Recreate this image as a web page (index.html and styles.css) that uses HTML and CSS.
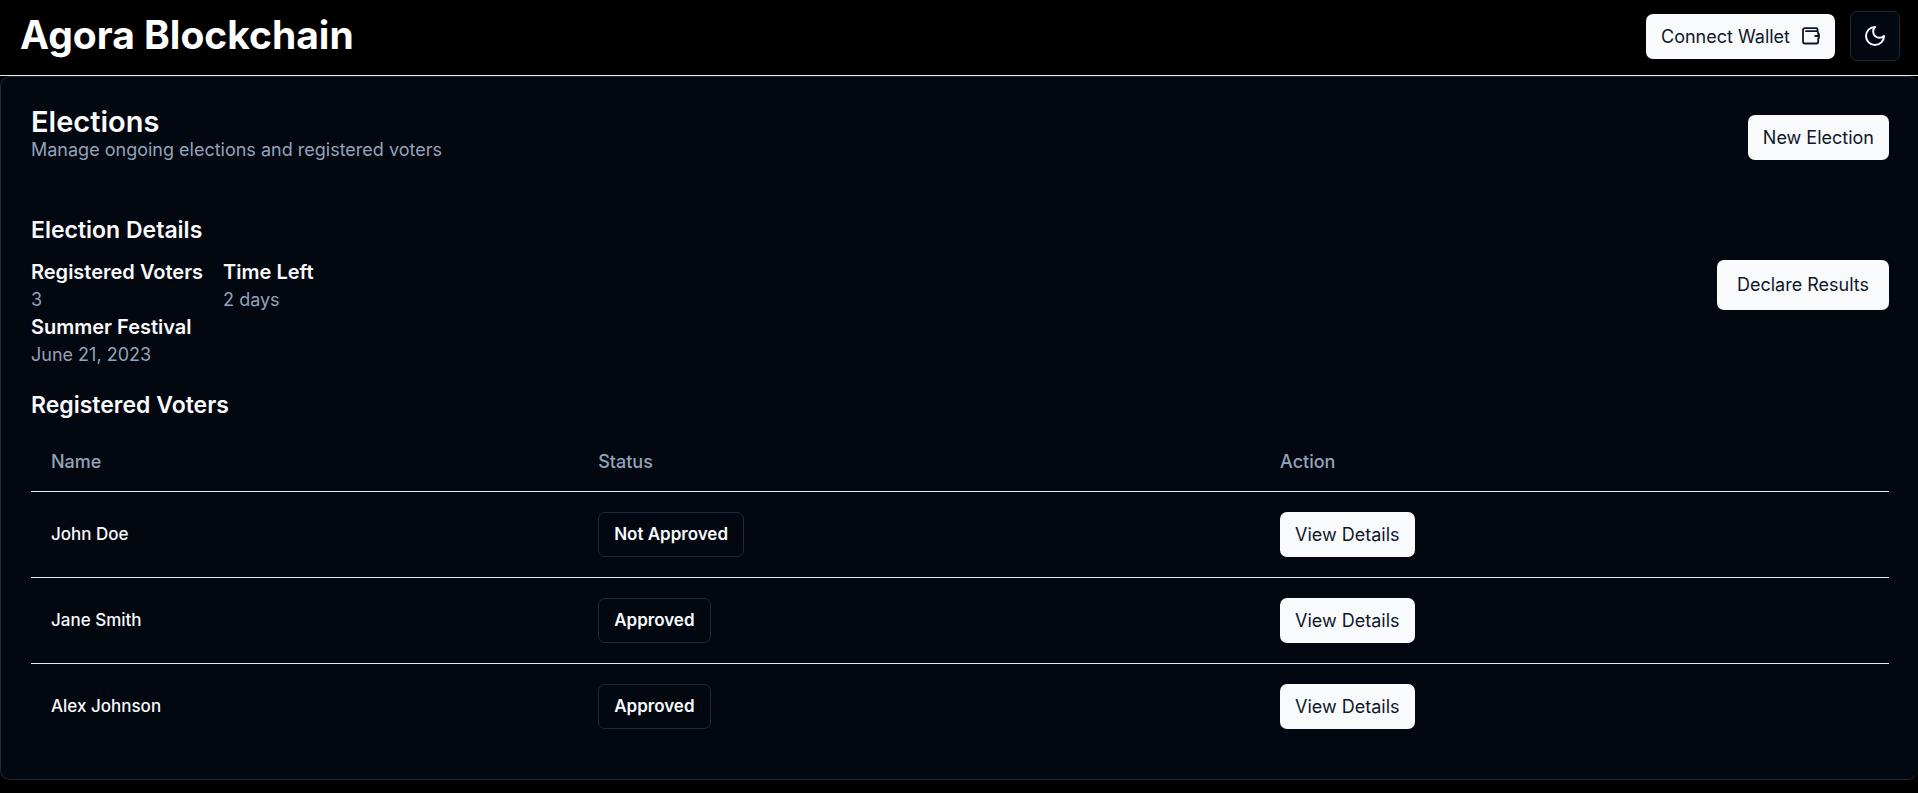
FILE: index.html
```html
<!DOCTYPE html>
<html lang="en">
<head>
<meta charset="utf-8">
<meta name="viewport" content="width=device-width, initial-scale=1">
<title>Agora Blockchain</title>
<link rel="stylesheet" href="styles.css">
</head>
<body>
<header class="topbar">
  <a class="brand" href="#">Agora Blockchain</a>
  <div class="topbar-actions">
    <button class="btn" type="button">Connect Wallet
      <svg class="wallet-icon" viewBox="0 0 18 18" fill="none" stroke="currentColor" stroke-width="1.8" stroke-linecap="round" stroke-linejoin="round" aria-hidden="true">
        <path d="M15.500 4V2.200c0-.7-.4-1.100-1.100-1.100H3C1.700 1.100 1 1.800 1 3V14.500c0 1.200.8 2 2 2H14.500c1 0 1.700-.7 1.700-1.700V11.500M16.200 7V5.900c0-1-.7-1.700-1.700-1.700H4"/>
        <path d="M17 7.200V10.800M17 9H13.200"/>
      </svg>
    </button>
    <button class="theme-toggle" type="button" aria-label="Toggle theme">
      <svg class="moon-icon" viewBox="0 0 24 24" fill="none" stroke="currentColor" stroke-width="2" stroke-linecap="round" stroke-linejoin="round" aria-hidden="true">
        <path d="M12 3a6 6 0 0 0 9 9 9 9 0 1 1-9-9Z"/>
      </svg>
    </button>
  </div>
</header>
<main class="card">
  <div class="card-header">
    <div class="card-heading">
      <h1 class="card-title">Elections</h1>
      <p class="muted">Manage ongoing elections and registered voters</p>
    </div>
    <button class="btn" type="button">New Election</button>
  </div>
  <section class="details">
    <h2 class="section-title">Election Details</h2>
    <div class="details-row">
      <div class="facts">
        <div>
          <h3 class="fact-label">Registered Voters</h3>
          <p class="muted">3</p>
        </div>
        <div>
          <h3 class="fact-label">Time Left</h3>
          <p class="muted">2 days</p>
        </div>
      </div>
      <button class="btn btn-large" type="button">Declare Results</button>
    </div>
    <h3 class="fact-label">Summer Festival</h3>
    <p class="muted">June 21, 2023</p>
  </section>
  <section class="voters">
    <h2 class="section-title">Registered Voters</h2>
    <table class="voter-table">
      <colgroup><col class="col-name"><col class="col-status"><col></colgroup>
      <thead>
        <tr><th scope="col">Name</th><th scope="col">Status</th><th scope="col">Action</th></tr>
      </thead>
      <tbody>
        <tr><td>John Doe</td><td><span class="badge">Not Approved</span></td><td><button class="btn" type="button">View Details</button></td></tr>
        <tr><td>Jane Smith</td><td><span class="badge">Approved</span></td><td><button class="btn" type="button">View Details</button></td></tr>
        <tr><td>Alex Johnson</td><td><span class="badge">Approved</span></td><td><button class="btn" type="button">View Details</button></td></tr>
      </tbody>
    </table>
  </section>
</main>
</body>
</html>
```
FILE: styles.css
```css
*, *::before, *::after { box-sizing: border-box; }

body {
  margin: 0;
  background: #000;
  color: #f8fafc;
  font-family: Inter, "Liberation Sans", sans-serif;
  font-size: 18px;
  line-height: 25px;
}

h1, h2, h3, p { margin: 0; }

.topbar {
  display: flex;
  align-items: flex-start;
  justify-content: space-between;
  padding: 11px 18px 14px 20px;
  border-bottom: 1px solid #e5e7eb;
}

.brand {
  color: #fff;
  font-size: 39px;
  font-weight: 700;
  line-height: 48px;
  text-decoration: none;
}

.topbar-actions { display: flex; align-items: center; gap: 15px; }

.btn {
  display: inline-flex;
  align-items: center;
  gap: 12px;
  height: 45px;
  padding: 0 15px;
  border: 0;
  border-radius: 7px;
  background: #f8fafc;
  color: #0f172a;
  font: inherit;
  white-space: nowrap;
}

.btn-large { height: 50px; padding: 0 20px; }

.wallet-icon { width: 18px; height: 18px; }

.theme-toggle {
  display: flex;
  align-items: center;
  justify-content: center;
  width: 50px;
  height: 50px;
  padding: 0;
  border: 1px solid #1e293b;
  border-radius: 7px;
  background: #020710;
  color: #f8fafc;
}

.moon-icon { width: 24px; height: 24px; }

.card {
  padding: 30px 29px 30px 30px;
  border: 1px solid #1e293b;
  border-right: 0;
  border-radius: 10px;
  background: #020710;
}

.card-header {
  display: flex;
  align-items: center;
  justify-content: space-between;
  margin-bottom: 44px;
}

.card-heading { padding-bottom: 6px; }

.card-title { font-size: 29px; font-weight: 600; line-height: 30px; }

.muted { color: #94a3b8; }

.section-title {
  margin-bottom: 9px;
  font-size: 23px;
  font-weight: 600;
  line-height: 36px;
}

.details { margin-bottom: 20px; }

.details-row { display: flex; align-items: center; justify-content: space-between; }

.facts { display: flex; gap: 20px; }

.fact-label { font-size: 20px; font-weight: 600; line-height: 30px; }

.voter-table { width: 100%; border-collapse: separate; border-spacing: 0; table-layout: fixed; }

.col-name { width: 29.45%; }
.col-status { width: 36.7%; }

.voter-table th,
.voter-table td { border-bottom: 1px solid #e5e7eb; font-weight: 500; text-align: left; }

.voter-table th { height: 60px; padding: 0 20px; color: #94a3b8; }
.voter-table td { padding: 20px; font-size: 17px; }
.voter-table tbody tr:last-child td { border-bottom: 0; }

.voter-table .btn { font-size: 18px; font-weight: 400; }
.voter-table .btn, .badge { vertical-align: top; }

.badge {
  display: inline-flex;
  align-items: center;
  height: 45px;
  padding: 0 15px;
  border: 1px solid #1e293b;
  border-radius: 7px;
  font-weight: 600;
}
```
